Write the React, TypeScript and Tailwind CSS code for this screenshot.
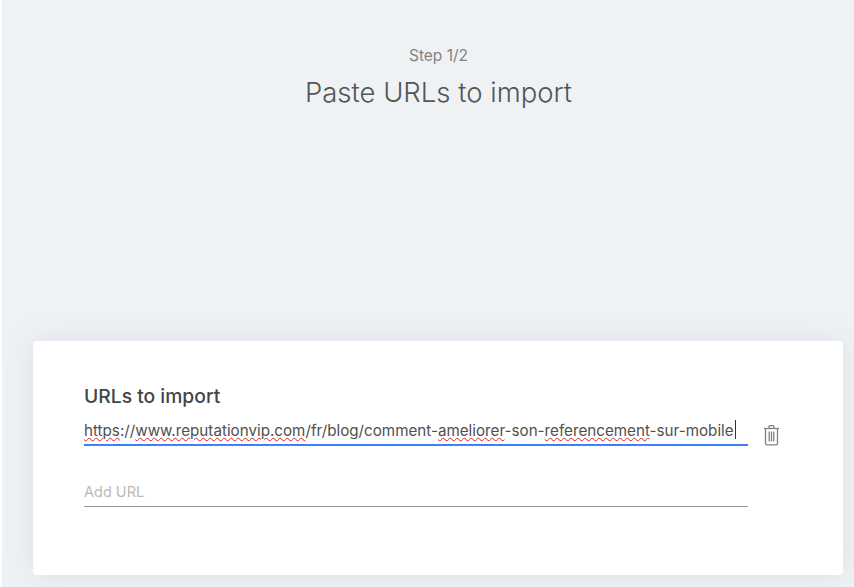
import React from 'react';

function TrashIcon() {
  return (
    <svg width="17" height="22" viewBox="0 0 17 22" fill="none" stroke="#808080" strokeWidth="1.3" className="shrink-0">
      <path d="M1 4.5h15" />
      <path d="M6 4.2V2.6c0-.6.4-1 1-1h3c.6 0 1 .4 1 1v1.6" />
      <path d="M2.5 4.5v15c0 .8.5 1.3 1.3 1.3h9.4c.8 0 1.3-.5 1.3-1.3v-15" />
      <path d="M6.2 7.5v10M8.5 7.5v10M10.8 7.5v10" />
    </svg>
  );
}

function Misspelled({ children }: { children: React.ReactNode }) {
  return <span className="underline decoration-wavy decoration-[#e02020] decoration-1 underline-offset-[1px]">{children}</span>;
}

export default function App() {
  return (
    <div className="h-[587px] w-[854px] overflow-hidden bg-white pl-[2px] font-['Inter','Liberation_Sans',sans-serif]">
      <div className="flex h-full flex-col bg-[#eff2f5]">
        <div className="flex h-[341px] shrink-0 flex-col items-center pl-[21px] pt-[46px]">
          <p className="text-[15.5px] leading-[20px] text-[#838383]">Step 1/2</p>
          <h1 className="mt-[8px] text-[27.5px] font-light leading-[36px] text-[#555555]">Paste URLs to import</h1>
        </div>

        <div className="ml-[31px] flex h-[234px] w-[810px] flex-col rounded-[4px] bg-white pl-[51px] pt-[43px] shadow-[0_0_30px_rgba(80,100,120,0.12)]">
          <h2 className="text-[19.3px] font-medium leading-[24px] text-[#444444]">URLs to import</h2>

          <div className="mt-[8px] flex items-start">
            <div className="flex h-[30px] w-[664px] items-start border-b-2 border-[#3b82f6] pt-[3px] text-[15.2px] leading-[24px] text-[#505050]">
              <span className="whitespace-nowrap">
                <Misspelled>https</Misspelled>://<Misspelled>www.reputationvip.com</Misspelled>/fr/blog/comment-<Misspelled>ameliorer</Misspelled>-son-<Misspelled>referencement</Misspelled>-sur-mobile
              </span>
              <span className="ml-px mt-[1px] h-[19px] w-px shrink-0 bg-[#333333]" />
            </div>
            <div className="ml-[15px] mt-[8px]">
              <TrashIcon />
            </div>
          </div>

          <div className="mt-[31px] h-[30px] w-[664px] border-b border-[#999999] pt-[3px] text-[14.5px] leading-[24px] text-[#b9b9b9]">
            Add URL
          </div>
        </div>
      </div>
    </div>
  );
}
